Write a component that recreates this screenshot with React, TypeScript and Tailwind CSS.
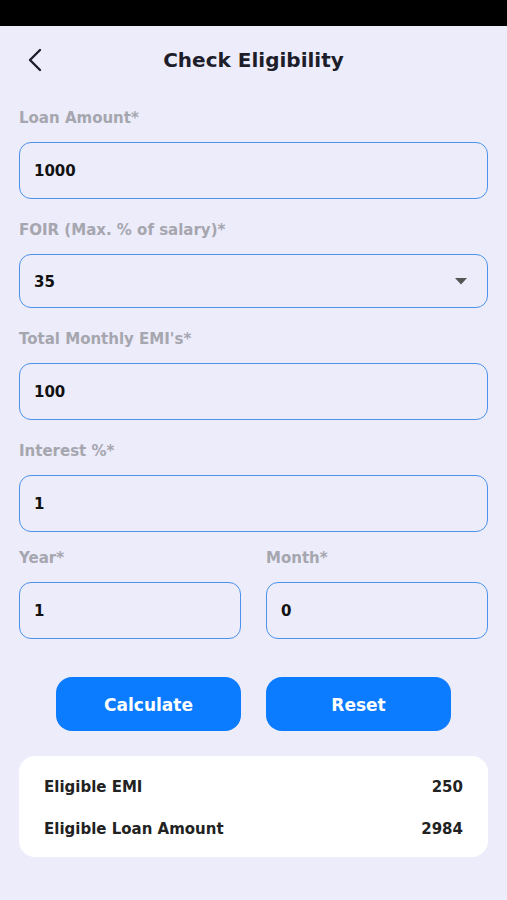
import { useState } from 'react';

interface FieldProps {
  label: string;
  value: string;
  onChange: (v: string) => void;
}

function Field({ label, value, onChange }: FieldProps) {
  return (
    <div className="flex flex-col">
      <label className="h-5 text-[15px] leading-[22px] font-bold text-[#a6a6ae]">{label}</label>
      <input
        type="text"
        value={value}
        onChange={(e) => onChange(e.target.value)}
        className="mt-[15px] h-[57px] w-full rounded-[12px] border-[1.5px] border-[#4b92ea] bg-transparent px-[14px] pt-px text-[15px] font-bold text-[#111] outline-none"
      />
    </div>
  );
}

export default function App() {
  const [loan, setLoan] = useState('1000');
  const [foir, setFoir] = useState('35');
  const [emis, setEmis] = useState('100');
  const [interest, setInterest] = useState('1');
  const [year, setYear] = useState('1');
  const [month, setMonth] = useState('0');

  const reset = () => {
    setLoan('');
    setFoir('35');
    setEmis('');
    setInterest('');
    setYear('');
    setMonth('');
  };

  return (
    <div
      className="min-h-[900px] w-full bg-[#ececfb] text-[#1e1e2a]"
      style={{ fontFamily: '"DejaVu Sans", "Noto Sans", sans-serif' }}
    >
      {/* Status bar */}
      <div className="h-[26px] bg-black" />

      {/* Header */}
      <div className="grid h-[68px] grid-cols-[56px_1fr_56px] items-center">
        <button className="flex h-full items-center justify-center pl-[14px]">
          <svg width="16" height="24" viewBox="0 0 16 24" fill="none">
            <path d="M13 2 L3 12 L13 22" stroke="#1e1e2a" strokeWidth="2.4" strokeLinecap="round" strokeLinejoin="round" />
          </svg>
        </button>
        <h1 className="text-center text-[20px] font-bold">Check Eligibility</h1>
        <div />
      </div>

      {/* Form */}
      <div className="flex flex-col px-[19px] pt-[13px]">
        <Field label="Loan Amount*" value={loan} onChange={setLoan} />

        <div className="mt-5 flex flex-col">
          <label className="h-5 text-[15px] leading-[22px] font-bold text-[#a6a6ae]">FOIR (Max. % of salary)*</label>
          <div className="mt-[15px] flex h-[54px] w-full items-center justify-between rounded-[12px] border-[1.5px] border-[#4b92ea] pl-[14px] pr-[20px]">
            <span className="pt-[3px] text-[15px] font-bold text-[#111]">{foir}</span>
            <svg width="12" height="7" viewBox="0 0 12 7">
              <path d="M0 0 H12 L6 6.5 Z" fill="#555" />
            </svg>
          </div>
        </div>

        <div className="mt-5">
          <Field label="Total Monthly EMI's*" value={emis} onChange={setEmis} />
        </div>

        <div className="mt-5">
          <Field label="Interest %*" value={interest} onChange={setInterest} />
        </div>

        <div className="mt-[15px] grid grid-cols-2 gap-[25px]">
          <Field label="Year*" value={year} onChange={setYear} />
          <Field label="Month*" value={month} onChange={setMonth} />
        </div>

        {/* Buttons */}
        <div className="mt-[38px] flex justify-center gap-[25px]">
          <button
            onClick={() => setFoir(foir)}
            className="h-[54px] w-[185px] rounded-[16px] bg-[#0b7bff] pt-[3px] text-[17px] font-bold text-white"
          >
            Calculate
          </button>
          <button
            onClick={reset}
            className="h-[54px] w-[185px] rounded-[16px] bg-[#0b7bff] pt-[3px] text-[17px] font-bold text-white"
          >
            Reset
          </button>
        </div>

        {/* Result card */}
        <div className="mt-[25px] flex h-[101px] flex-col justify-center gap-[19px] rounded-[16px] bg-white px-[25px] pt-[3px]">
          <div className="flex items-center justify-between text-[15px] font-bold text-[#222]">
            <span>Eligible EMI</span>
            <span>250</span>
          </div>
          <div className="flex items-center justify-between text-[15px] font-bold text-[#222]">
            <span>Eligible Loan Amount</span>
            <span>2984</span>
          </div>
        </div>
      </div>
    </div>
  );
}
